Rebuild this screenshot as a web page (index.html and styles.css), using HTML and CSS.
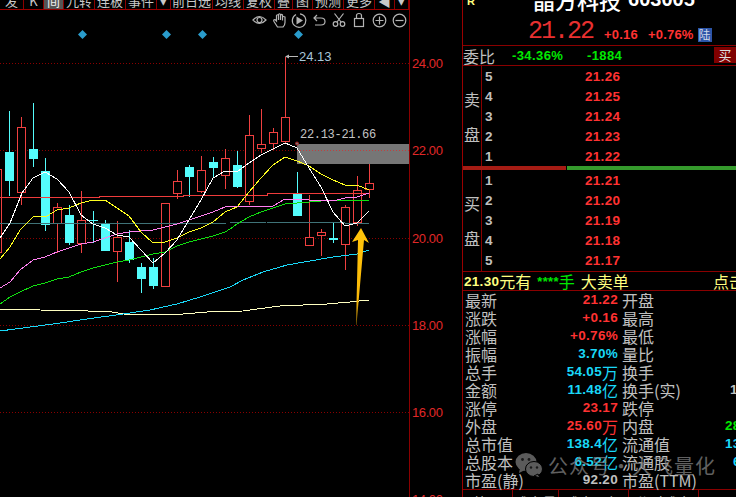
FILE: index.html
```html
<!DOCTYPE html>
<html lang="zh">
<head>
  <meta charset="UTF-8">
  <title>晶方科技 603005</title>
  <link rel="stylesheet" href="styles.css">
</head>
<body>
  <div class="terminal">
    <div class="chart-col">
      <div class="toolbar">
        <div class="tool t0"><span>发</span></div>
        <div class="tool t1"><span>K</span></div>
        <div class="tool t1 active"><span>间</span></div>
        <div class="tool t2"><span>九转</span></div>
        <div class="tool t2"><span>连板</span></div>
        <div class="tool t2"><span>事件</span></div>
        <div class="tool tn"><span>▾</span></div>
        <div class="tool t3"><span>前日选</span></div>
        <div class="tool t2"><span>均线</span></div>
        <div class="tool t2"><span>复权</span></div>
        <div class="tool ts"><span>叠</span></div>
        <div class="tool t1"><span>图</span></div>
        <div class="tool t2"><span>预测</span></div>
        <div class="tool t2"><span>更多</span></div>
        <div class="tool t1"><span>◀</span></div>
        <div class="tool tn"><span>▾</span></div>
      </div>

      <svg class="chart" viewBox="0 10 462 487" width="462" height="487">
        <!-- price grid -->
        <path class="grid" d="M0 63.5H409M0 150.5H409M0 238.5H409M0 325.5H409M0 412.5H409"/>
        <path class="axis" d="M409.5 10V497"/>
        <text class="axis-label" x="412" y="68">24.00</text>
        <text class="axis-label" x="412" y="155">22.00</text>
        <text class="axis-label" x="412" y="243">20.00</text>
        <text class="axis-label" x="412" y="330">18.00</text>
        <text class="axis-label" x="412" y="417">16.00</text>
        <text class="axis-label" x="412" y="504">14.00</text>

        <!-- selected range -->
        <rect class="range" x="297" y="144" width="112" height="20"/>
        <path class="grid-over" d="M297 150.5H409"/>
        <text class="range-label" x="300" y="138">22.13-21.66</text>

        <!-- signal markers -->
        <path class="marker" d="M82.5 30L87 34.5L82.5 39L78 34.5Z"/>
        <path class="marker" d="M166.5 30L171 34.5L166.5 39L162 34.5Z"/>
        <path class="marker" d="M202.5 30L207 34.5L202.5 39L198 34.5Z"/>
        <path class="marker" d="M298.5 30L303 34.5L298.5 39L294 34.5Z"/>

        <!-- wicks -->
        <path class="wick-down" d="M9.5 111V196M33.5 103V167M45.5 158V231M69.5 205V245M93.5 211V243M105.5 220V251M129.5 230V263M141.5 263V293M153.5 258V289M189.5 165V197M213.5 157V178M237.5 151V188M297.5 172V216M333.5 223V243"/>
        <path class="wick-up" d="M21.5 117V205M57.5 203V253M81.5 191V253M117.5 221V282M177.5 170V199M201.5 156V193M225.5 149V189M249.5 115V205M261.5 109V153M273.5 128V150M285.5 57V143M309.5 195V245M321.5 229V256M345.5 205V270M357.5 176V226M369.5 164V198"/>

        <!-- falling candles -->
        <rect class="body-down" x="5" y="152" width="9" height="29"/>
        <rect class="body-down" x="29" y="149" width="9" height="10"/>
        <rect class="body-down" x="41" y="171" width="9" height="54"/>
        <rect class="body-down" x="65" y="215" width="9" height="28"/>
        <rect class="body-down" x="89" y="220" width="9" height="1"/>
        <rect class="body-down" x="101" y="224" width="9" height="27"/>
        <rect class="body-down" x="125" y="242" width="9" height="18"/>
        <rect class="body-down" x="137" y="267" width="9" height="12"/>
        <rect class="body-down" x="149" y="267" width="9" height="19"/>
        <rect class="body-down" x="185" y="167" width="9" height="10"/>
        <rect class="body-down" x="209" y="162" width="9" height="6"/>
        <rect class="body-down" x="233" y="165" width="9" height="22"/>
        <rect class="body-down" x="293" y="194" width="9" height="22"/>
        <rect class="body-down" x="329" y="238" width="9" height="2"/>

        <!-- rising candles -->
        <rect class="body-up" x="-6.5" y="169.5" width="8" height="83"/>
        <rect class="body-up" x="17.5" y="127.5" width="8" height="65"/>
        <rect class="body-up" x="53.5" y="207.5" width="8" height="16"/>
        <rect class="body-up" x="77.5" y="220.5" width="8" height="23"/>
        <rect class="body-up" x="113.5" y="237.5" width="8" height="14"/>
        <rect class="body-up" x="161.5" y="203.5" width="8" height="83"/>
        <rect class="body-up" x="173.5" y="181.5" width="8" height="12"/>
        <rect class="body-up" x="197.5" y="170.5" width="8" height="21"/>
        <rect class="body-up" x="221.5" y="158.5" width="8" height="17"/>
        <rect class="body-up" x="245.5" y="135.5" width="8" height="66"/>
        <rect class="body-up" x="257.5" y="144.5" width="8" height="4"/>
        <rect class="body-up" x="269.5" y="132.5" width="8" height="11"/>
        <rect class="body-up" x="281.5" y="117.5" width="8" height="24"/>
        <rect class="body-up" x="305.5" y="237.5" width="8" height="8"/>
        <rect class="body-up" x="317.5" y="232.5" width="8" height="3"/>
        <rect class="body-up" x="341.5" y="207.5" width="8" height="37"/>
        <rect class="body-up" x="353.5" y="190.5" width="8" height="32"/>
        <rect class="body-up" x="365.5" y="183.5" width="8" height="6"/>

        <!-- moving averages -->
        <polyline class="ma ma-cream" points="0,309 40,310 88,311 112,312 124,314 136,314 183,314 207,312 243,311 257,309 280,306 303,305 327,304 350,302 369,300"/>
        <polyline class="ma ma-cyan" points="0,331 38,326 60,323 87,319 123,314 150,310 177,304 200,297 230,287 243,280 263,272 287,265 310,261 333,257 357,254 369,250"/>
        <polyline class="ma ma-slate" points="0,224 230,223 267,222 316,222 345,223 369,224"/>
        <polyline class="ma ma-red" points="0,197 99,197 99,196 183,196 183,195 267,195 267,194 369,193"/>
        <polyline class="ma ma-green" points="0,304 10,297 20,292 33,286 45,283 57,279 69,277 81,272 93,268 105,265 117,262 129,260 141,257 153,254 165,252 177,246 189,242 201,239 213,236 225,232 230,229 237,224 249,217 261,212 273,208 285,204 297,203 309,202 321,201 333,200 369,200"/>
        <polyline class="ma ma-pink" points="0,288 10,282 20,270 33,260 45,257 57,252 69,248 81,244 93,242 105,238 117,234 129,232 141,231 153,230 165,227 177,224 189,220 201,216 213,212 225,207 230,206 273,206 285,199 297,199 309,200 333,201 345,198 357,197 369,193"/>
        <polyline class="ma ma-yellow" points="0,259 10,247 20,230 33,217 47,216 57,210 69,208 81,203 93,200 105,200 117,208 129,216 141,232 153,243 165,242 177,238 189,232 201,228 213,222 225,212 237,207 249,192 261,178 273,165 285,157 297,161 309,166 321,174 333,180 345,185 357,185 369,190"/>
        <polyline class="ma ma-white" points="0,238 10,223 22,193 33,178 45,172 57,179 69,192 81,215 93,224 105,228 117,235 129,237 141,250 153,263 165,253 177,240 189,220 201,200 213,178 225,171 237,172 249,163 261,155 273,149 285,143 297,148 309,168 321,187 333,212 345,226 357,223 369,211"/>

        <!-- high price callout -->
        <circle class="range-dot" cx="297" cy="143.5" r="1.5"/>
        <path class="callout" d="M298 56.5H288"/>
        <path class="callout-head" d="M285 56.5L289 54.5V58.5Z"/>
        <text class="callout-label" x="299" y="61">24.13</text>

        <!-- hand drawn arrow -->
        <defs>
          <linearGradient id="arrowFill" x1="0" y1="0" x2="0" y2="1">
            <stop offset="0" stop-color="#ffc40a"/>
            <stop offset="0.75" stop-color="#fbb908"/>
            <stop offset="1" stop-color="#7a5a08"/>
          </linearGradient>
        </defs>
        <path class="arrow" d="M361 228L369 243L364 240L356.5 325L356 325L358 240L352 242Z"/>

        <!-- chart tools -->
        <g class="tools">
          <path d="M253 20Q259.5 13 266 20Q259.5 27 253 20Z"/>
          <circle cx="259.5" cy="20" r="2.5"/>
          <path d="M277.5 27L274 21.5Q273 19.5 275 19.5L276.5 21V15.5Q277.5 14 278.5 15.5V20V14.5Q279.5 13 280.5 14.5V20V15Q281.5 14 282.5 15V20.5V17Q283.5 16 285 17V22.5Q285 25 283 27Z"/>
          <path d="M300 13.8A6.8 6.8 0 1 1 296 14.5"/>
          <path class="solid" d="M296.5 16.5L303 20.5L296.5 24.5Z"/>
          <path d="M314 18H321Q325 18 325 21.5T321 25H315M317 15L314 18L317 21"/>
          <circle cx="335.5" cy="24" r="2.3"/>
          <circle cx="342.5" cy="24" r="2.3"/>
          <path d="M337 22L343.5 13.5M341 22L334.5 13.5"/>
          <rect x="354.5" y="18.5" width="9" height="8"/>
          <path d="M356.5 18.5V15.5Q356.5 13.5 359 13.5Q361.5 13.5 361.5 15.5V18.5"/>
          <circle cx="379.5" cy="20.5" r="6.3"/>
          <path d="M375.5 20.5H383.5M379.5 16.5V24.5"/>
          <circle cx="399.5" cy="20.5" r="6.3"/>
          <path d="M395.5 20.5H403.5"/>
        </g>
      </svg>
    </div>

    <div class="panel">
      <div class="head">
        <span class="flag">R</span>
        <div class="title"><span class="title-name">晶方科技</span><span class="title-code">603005</span></div>
        <div class="price-row">
          <span class="last">21.22</span>
          <span class="change">+0.16</span>
          <span class="change">+0.76%</span>
          <span class="market">陆</span>
        </div>
      </div>

      <div class="ratio">
        <span class="ratio-label">委比</span>
        <span class="ratio-pct">-34.36%</span>
        <span class="ratio-num">-1884</span>
        <span class="buy-btn">买</span>
      </div>

      <div class="book">
        <div class="side"><span>卖</span><span>盘</span></div>
        <div class="levels">
          <div class="level"><b>5</b><b class="up">21.26</b></div>
          <div class="level"><b>4</b><b class="up">21.25</b></div>
          <div class="level"><b>3</b><b class="up">21.24</b></div>
          <div class="level"><b>2</b><b class="up">21.23</b></div>
          <div class="level"><b>1</b><b class="up">21.22</b></div>
        </div>
      </div>

      <div class="balance"><div class="balance-sell"></div><div class="balance-buy"></div></div>

      <div class="book book-buy">
        <div class="side"><span>买</span><span>盘</span></div>
        <div class="levels">
          <div class="level"><b>1</b><b class="up">21.21</b></div>
          <div class="level"><b>2</b><b class="up">21.20</b></div>
          <div class="level"><b>3</b><b class="up">21.19</b></div>
          <div class="level"><b>4</b><b class="up">21.18</b></div>
          <div class="level"><b>5</b><b class="up">21.17</b></div>
        </div>
      </div>

      <div class="notice">
        <b>21.30</b><span>元有</span><b class="stars">****</b><span class="stars">手</span><span class="notice-kind">大卖单</span><span class="notice-link">点击</span>
      </div>

      <div class="stats">
        <div class="stat"><span>最新</span><b class="up">21.22</b><span>开盘</span><b></b></div>
        <div class="stat"><span>涨跌</span><b class="up">+0.16</b><span>最高</span><b></b></div>
        <div class="stat"><span>涨幅</span><b class="up">+0.76%</b><span>最低</span><b></b></div>
        <div class="stat"><span>振幅</span><b class="info">3.70%</b><span>量比</span><b></b></div>
        <div class="stat"><span>总手</span><b class="info">54.05<i>万</i></b><span>换手</span><b></b></div>
        <div class="stat"><span>金额</span><b class="info">11.48<i>亿</i></b><span>换手(实)</span><b class="far">1</b></div>
        <div class="stat"><span>涨停</span><b class="up">23.17</b><span>跌停</span><b></b></div>
        <div class="stat"><span>外盘</span><b class="up">25.60<i>万</i></b><span>内盘</span><b class="down">28</b></div>
        <div class="stat"><span>总市值</span><b class="info">138.4<i>亿</i></b><span>流通值</span><b class="info">13</b></div>
        <div class="stat"><span>总股本</span><b class="info">6.52<i>亿</i></b><span>流通股</span><b class="info farther">6</b></div>
        <div class="stat"><span>市盈(静)</span><b class="plain">92.20</b><span>市盈(TTM)</span><b></b></div>
      </div>

      <div class="tabs"><span class="tab-a">筹码</span><span class="tab-b">成交量</span><span class="tab-c">成交明细</span><span class="tab-d">分时成交</span></div>

      <div class="watermark">
        <svg class="wechat" viewBox="0 0 28 27" width="28" height="27">
          <ellipse class="bubble-back" cx="11" cy="10" rx="10.5" ry="9"/>
          <path class="bubble-back" d="M5 16L4 21L10 18Z"/>
          <circle class="eye" cx="7.5" cy="7.5" r="1.4"/>
          <circle class="eye" cx="14" cy="7.5" r="1.4"/>
          <ellipse class="bubble-front" cx="19" cy="17" rx="8.5" ry="7.5"/>
          <path class="bubble-front" d="M23 22L25 26L19 24Z"/>
          <circle class="eye" cx="16" cy="15.5" r="1.2"/>
          <circle class="eye" cx="22" cy="15.5" r="1.2"/>
        </svg>
        <span class="mark-text">公众号·大飞量化</span>
      </div>
    </div>
  </div>
</body>
</html>
```

FILE: styles.css
```css
html, body {
  margin: 0;
  height: 100%;
  background: #000;
  overflow: hidden;
}

body {
  font-family: "Liberation Sans", "Noto Sans CJK SC", sans-serif;
  color: #c0c0c0;
}

.terminal {
  display: flex;
  width: 736px;
  height: 497px;
  overflow: hidden;
}

.chart-col {
  flex: 0 0 462px;
  display: flex;
  flex-direction: column;
}

/* toolbar: only the lower part of the labels is on screen */
.toolbar {
  display: flex;
  width: 409px;
  height: 9px;
  border-bottom: 1px solid #9a0000;
  border-right: 1px solid #9a0000;
}

.tool {
  height: 9px;
  display: flex;
  align-items: flex-end;
  justify-content: center;
  overflow: hidden;
  box-sizing: border-box;
  border-right: 1px solid #8a0000;
  font-family: "Noto Sans CJK SC", sans-serif;
  font-size: 13px;
  color: #c8c8c8;
}

.tool span {
  line-height: 16px;
  white-space: nowrap;
}

.t0 { width: 24px; }
.t1 { width: 20px; }
.t2 { width: 31px; }
.t3 { width: 42px; }
.ts { width: 18px; }
.tn { width: 14px; }

.tool.active {
  background: #555;
  color: #eee;
}

.chart {
  display: block;
  shape-rendering: crispEdges;
}

.grid {
  stroke: #8a0000;
  stroke-width: 1;
  stroke-dasharray: 1 2;
  fill: none;
}

.grid-over {
  stroke: #c04040;
  stroke-width: 1;
  stroke-dasharray: 1 2;
  fill: none;
}

.axis {
  stroke: #8a0000;
  stroke-width: 1;
}

.axis-label {
  font-size: 13px;
  fill: #e02828;
  letter-spacing: -0.4px;
  shape-rendering: auto;
}

.range {
  fill: #767676;
}

.range-label {
  font-family: "Liberation Mono", monospace;
  font-size: 12px;
  letter-spacing: -0.3px;
  fill: #c4c4c4;
}

.range-dot {
  fill: #777;
  stroke: #b02020;
  shape-rendering: auto;
}

.marker {
  fill: #2a9ccc;
  shape-rendering: auto;
}

.wick-down {
  stroke: #54fcfc;
  fill: none;
}

.wick-up {
  stroke: #f04040;
  fill: none;
}

.body-down {
  fill: #54fcfc;
}

.body-up {
  fill: #000;
  stroke: #f04040;
}

.ma {
  fill: none;
  stroke-width: 1;
}

.ma-cream { stroke: #ffffc0; }
.ma-cyan { stroke: #19d8f8; }
.ma-slate { stroke: #3f7378; }
.ma-red { stroke: #f03c3c; }
.ma-green { stroke: #10e010; }
.ma-pink { stroke: #ff80f0; }
.ma-yellow { stroke: #ffff20; }
.ma-white { stroke: #fff; }

.callout {
  stroke: #b8b8b8;
}

.callout-head {
  fill: #b8b8b8;
  shape-rendering: auto;
}

.callout-label {
  font-size: 13px;
  fill: #a9c6d8;
}

.arrow {
  fill: url(#arrowFill);
  shape-rendering: auto;
}

.tools {
  fill: none;
  stroke: #b4b4b4;
  stroke-width: 1.2;
  shape-rendering: auto;
}

.tools .solid {
  fill: #b4b4b4;
  stroke: none;
}

/* right hand quote panel */
.panel {
  position: relative;
  flex: 0 0 274px;
  box-sizing: border-box;
  border-left: 1px solid #9a0000;
  overflow: hidden;
}

.head {
  position: relative;
  height: 45px;
  border-bottom: 1px solid #8a0000;
}

.flag {
  position: absolute;
  left: 4px;
  top: -5px;
  font-size: 11px;
  font-weight: bold;
  color: #ffff80;
}

.title {
  height: 13px;
  padding-left: 70px;
  display: flex;
  align-items: flex-end;
  gap: 7px;
  overflow: hidden;
  color: #fff;
  font-weight: bold;
}

.title-name {
  font-family: "Noto Sans CJK SC", sans-serif;
  font-size: 22px;
  line-height: 28px;
  font-weight: 500;
}

.title-code {
  font-size: 20px;
  line-height: 28px;
}

.price-row {
  height: 32px;
  padding-left: 65px;
  display: flex;
  align-items: flex-end;
  color: #ff3232;
}

.last {
  font-family: "Liberation Mono", monospace;
  font-size: 25px;
  letter-spacing: -2px;
  line-height: 26px;
  color: #e83030;
  margin-right: 11px;
}

.change {
  font-size: 13px;
  font-weight: bold;
  letter-spacing: 0.2px;
  line-height: 20px;
  margin-right: 10px;
}

.change + .change {
  margin-right: 4px;
}

.market {
  margin-bottom: 3px;
  width: 14px;
  height: 14px;
  background: #2c55a8;
  color: #cfd8e8;
  font-family: "Noto Sans CJK SC", sans-serif;
  font-size: 12px;
  line-height: 14px;
  text-align: center;
}

.ratio {
  position: relative;
  height: 19px;
  border-bottom: 1px solid #8a0000;
  display: flex;
  align-items: center;
}

.ratio-label {
  font-family: "Noto Sans CJK SC", sans-serif;
  font-size: 16px;
  width: 49px;
}

.ratio-pct,
.ratio-num {
  font-size: 13px;
  font-weight: bold;
  letter-spacing: 0.4px;
  color: #00e800;
}

.ratio-pct {
  width: 75px;
}

.buy-btn {
  position: absolute;
  right: 0;
  top: 1px;
  width: 22px;
  height: 16px;
  background: #800000;
  color: #ddd;
  font-family: "Noto Sans CJK SC", sans-serif;
  font-size: 13px;
  line-height: 16px;
  text-align: center;
}

.book {
  display: flex;
  height: 100px;
}

.book-buy {
  height: 101px;
  border-bottom: 1px solid #8a0000;
}

.side {
  flex: 0 0 18px;
  border-right: 1px solid #8a0000;
  display: flex;
  flex-direction: column;
  justify-content: center;
  align-items: center;
  gap: 15px;
  font-family: "Noto Sans CJK SC", sans-serif;
  font-size: 16px;
  line-height: 20px;
}

.levels {
  flex: 1;
  display: flex;
  flex-direction: column;
}

.level {
  height: 20px;
  display: grid;
  grid-template-columns: 100px auto;
  align-items: center;
  padding-left: 3px;
  font-size: 13.5px;
  letter-spacing: 0.3px;
}

.up { color: #ff3232; }
.down { color: #00e800; }
.info { color: #19d8f8; }
.plain { color: #c0c0c0; }

.balance {
  display: flex;
  height: 4px;
}

.balance-sell {
  flex: 0 0 103px;
  background: #a61c14;
  margin-right: 1px;
}

.balance-buy {
  flex: 1;
  background: #359a2c;
}

.notice {
  position: relative;
  height: 18px;
  border-bottom: 1px solid #8a0000;
  display: flex;
  align-items: center;
  padding-left: 1px;
  color: #ffff80;
  font-size: 16px;
  font-family: "Noto Sans CJK SC", sans-serif;
  white-space: nowrap;
}

.notice b {
  font-family: "Liberation Sans", sans-serif;
  font-size: 13.5px;
  letter-spacing: 0.3px;
}

.notice .stars {
  color: #00e800;
}

.notice b.stars {
  margin-left: 6px;
  font-size: 13px;
}

.notice-kind {
  margin-left: 6px;
}

.notice-link {
  position: absolute;
  left: 250px;
}

.stats {
  border-bottom: 1px solid #8a0000;
}

.stat {
  height: 18px;
  display: grid;
  grid-template-columns: 85px 68px 107px auto;
  grid-template-rows: 18px;
  align-items: center;
  font-size: 16px;
  line-height: 18px;
  padding-left: 2px;
  white-space: nowrap;
}

.stat span {
  font-family: "Noto Sans CJK SC", "Liberation Sans", sans-serif;
}

.stat span:nth-child(3) {
  padding-left: 4px;
}

.stat b {
  display: flex;
  align-items: center;
  justify-content: flex-end;
  height: 18px;
  font-size: 13.5px;
  letter-spacing: 0.3px;
}

.stat b:last-child {
  justify-content: flex-start;
}

.stat i {
  font-family: "Noto Sans CJK SC", sans-serif;
  font-style: normal;
  font-weight: normal;
  font-size: 16px;
  letter-spacing: 0;
}

.stat b.far { padding-left: 5px; }
.stat b.farther { padding-left: 8px; }

.tabs {
  height: 7px;
  display: flex;
  overflow: hidden;
  font-family: "Noto Sans CJK SC", sans-serif;
  font-size: 14px;
  line-height: 24px;
  color: #c0c0c0;
  white-space: nowrap;
}

.tabs span {
  box-sizing: border-box;
  border-right: 1px solid #8a0000;
  text-align: center;
}

.tab-a { flex: 0 0 50px; }
.tab-b { flex: 0 0 46px; }
.tab-c { flex: 0 0 70px; }
.tab-d { flex: 0 0 70px; }

/* watermark sits over the stats */
.watermark {
  position: absolute;
  left: 52px;
  top: 451px;
  display: flex;
  align-items: center;
  gap: 5px;
  opacity: 0.75;
  pointer-events: none;
}

.bubble-back,
.bubble-front {
  fill: #7a7a7a;
}

.bubble-front {
  stroke: #000;
  stroke-width: 1;
}

.eye {
  fill: #222;
}

.mark-text {
  font-family: "Noto Sans CJK SC", sans-serif;
  font-size: 20px;
  letter-spacing: 1px;
  color: #808080;
  white-space: nowrap;
}
```
